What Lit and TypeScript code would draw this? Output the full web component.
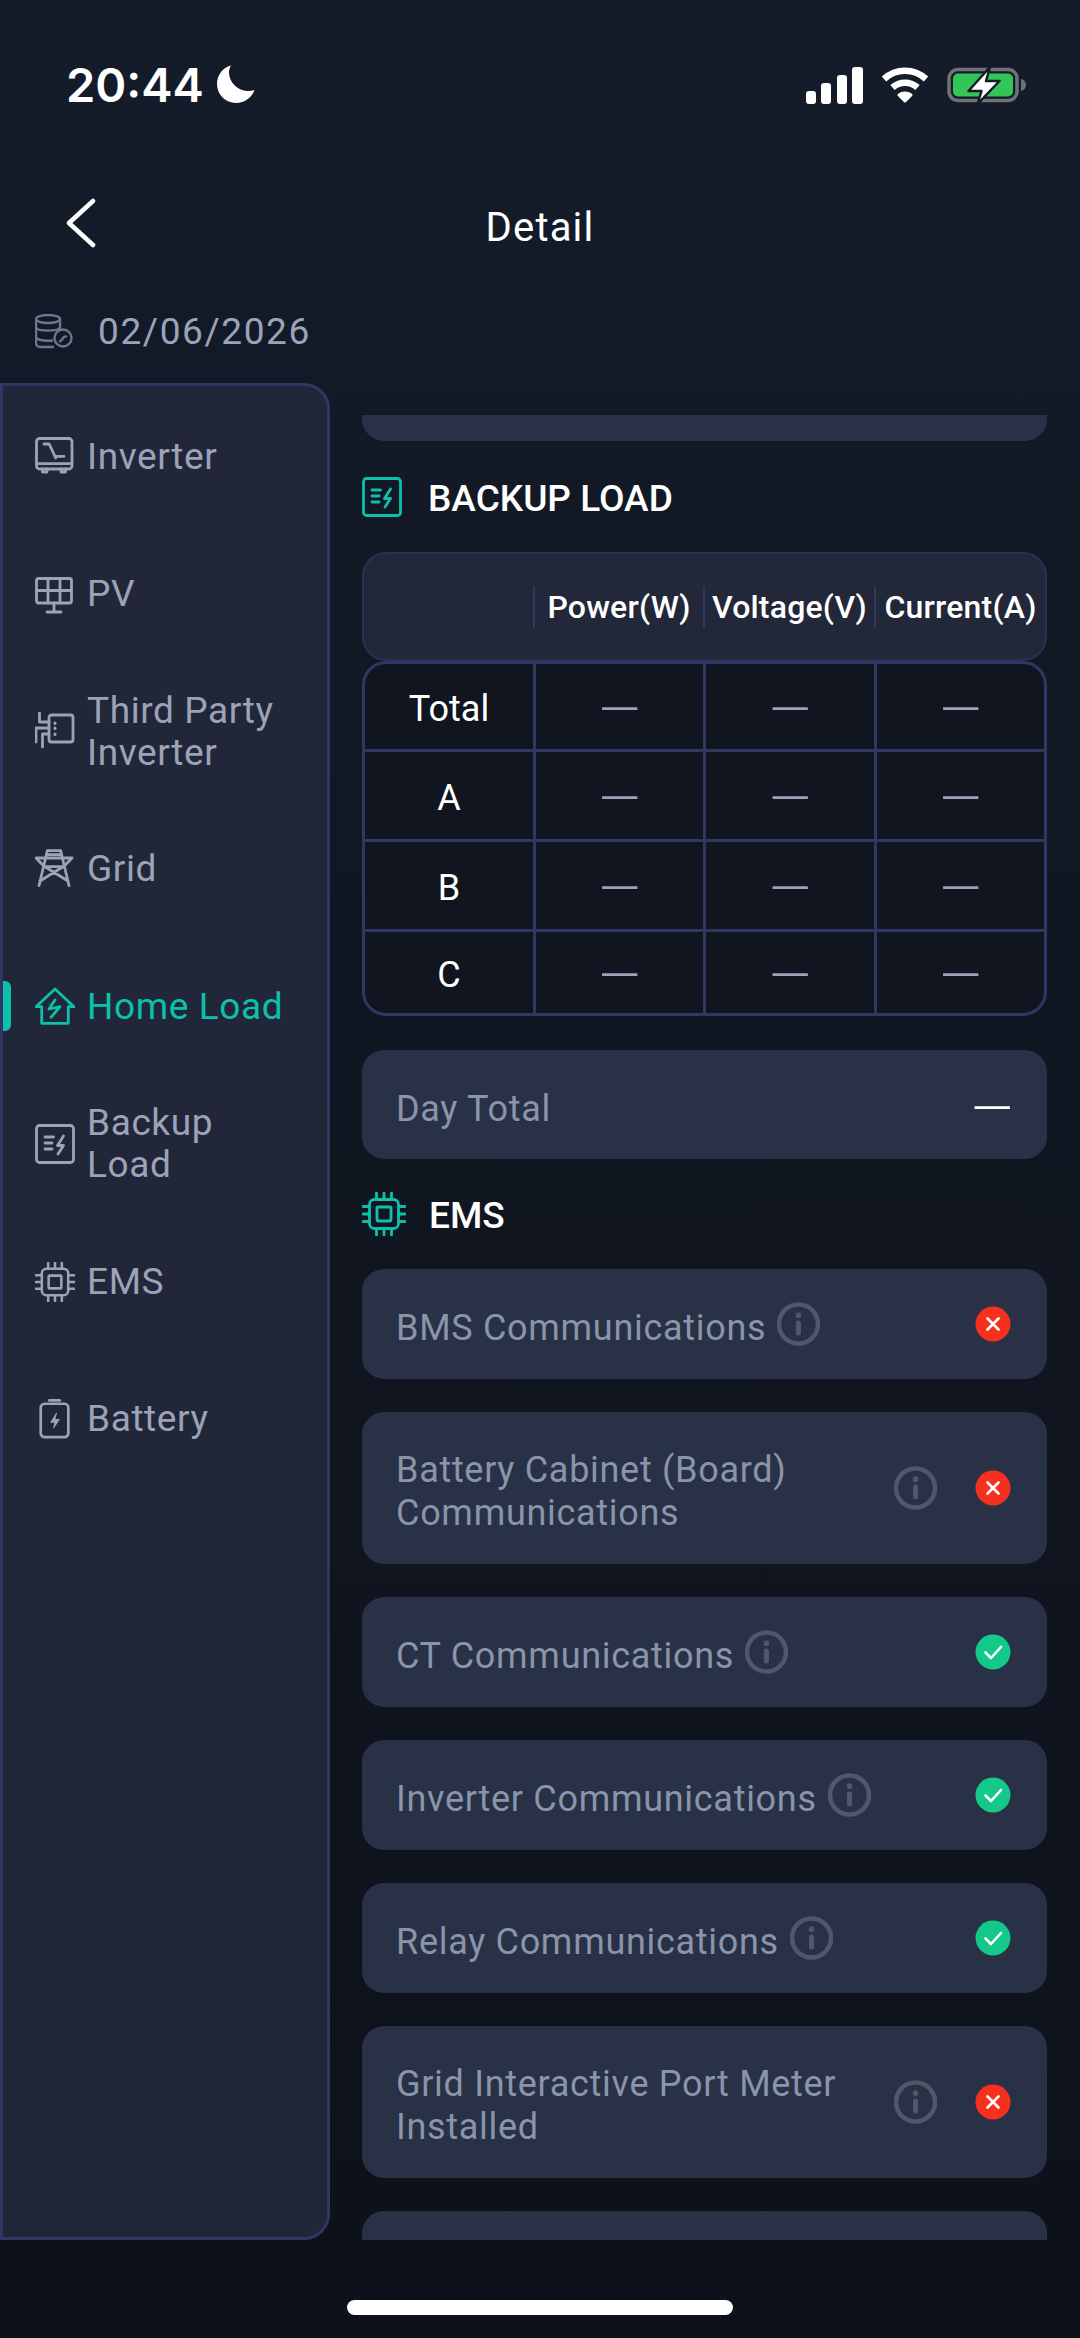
import { LitElement, css, html, svg } from "lit";
import { customElement } from "lit/decorators.js";

const icons: Record<string, unknown> = {
  inverter: svg`<rect x="1.500" y="1.500" width="35.500" height="30.500" rx="3"/><path d="M1.500 26.700h35.500M7.500 32v3h4.500v-3M26 32v3h4.500v-3M9 7h5M14.700 8l6 13M22.300 19.300H29"/>`,
  pv: svg`<rect x="1.500" y="4.500" width="35" height="24.500" rx="2"/><path d="M13 4.500V29M25 4.500V29M1.500 16.500h35M19 29v9M12 38h14"/>`,
  third: svg`<rect x="14" y="3" width="24" height="27" rx="2.500"/><path d="M4.500 0v10H14M1 30V16h13M7.500 35V22H14"/><path d="M20 11v.5M20 16v.5M20 22v.5" stroke-width="3"/>`,
  grid: svg`<path d="M12.300 1.700h13.400M11.500 5.700h15M1 9h36M1 9l8.500 8.700M37 9l-8.500 8.700M9.500 17.700h19M12.300 1.700 4 36.700M25.700 1.700 34 36.700M10 17.700 33 32M28 17.700 5 32"/>`,
  home: svg`<path d="M20 2 1 19.700h5.700v16.600h26.600V19.700H39z"/><path d="M20 13l-6 9 11-2.300-9 10.600"/>`,
  backup: svg`<rect x="1.500" y="1.500" width="37" height="37" rx="3"/><path d="M10 13h8.500M10 19h7M10 25h7M28.500 12l-6 9.500h6L23 30"/>`,
  ems: svg`<rect x="7.500" y="7.500" width="29" height="29" rx="5"/><rect x="15" y="15" width="14" height="14" rx="1"/><path d="M14.500 1v6.500M22 1v6.500M29.500 1v6.500M14.500 36.500V43M22 36.500V43M29.500 36.500V43M1 14.500h6.500M1 22h6.500M1 29.500h6.500M36.500 14.500H43M36.500 22H43M36.500 29.500H43"/>`,
  battery: svg`<rect x="5" y="5" width="29" height="35" rx="4"/><path d="M14 1.500h11"/><path d="M21.500 15 15.500 24.500h4.500l-1.500 6 6-9h-4.500z" fill="currentColor" stroke-width="1"/>`,
};

const navItems = [
  { key: "inverter", label: "Inverter" },
  { key: "pv", label: "PV" },
  { key: "third", label: "Third Party Inverter" },
  { key: "grid", label: "Grid" },
  { key: "home", label: "Home Load", active: true },
  { key: "backup", label: "Backup Load" },
  { key: "ems", label: "EMS" },
  { key: "battery", label: "Battery" },
];

const tableRows = ["Total", "A", "B", "C"];

const comms = [
  { label: "BMS Communications", ok: false },
  { label: "Battery Cabinet (Board) Communications", ok: false },
  { label: "CT Communications", ok: true },
  { label: "Inverter Communications", ok: true },
  { label: "Relay Communications", ok: true },
  { label: "Grid Interactive Port Meter Installed", ok: false },
];

@customElement("app-root")
export class AppRoot extends LitElement {
  static styles = css`
    :host {
      display: block;
      width: 1080px;
      height: 2338px;
      overflow: hidden;
      font-family: "Roboto", "Noto Sans", sans-serif;
      background: linear-gradient(180deg, #141c2a 0%, #111722 40%, #0d111a 100%);
    }

    .status {
      height: 170px;
      padding: 0 53px 0 66px;
      box-sizing: border-box;
      display: flex;
      align-items: center;
      justify-content: space-between;
      color: #fff;
    }

    .time {
      display: flex;
      align-items: center;
      gap: 13px;
      margin-top: -2px;
      font-family: "Inter", sans-serif;
      font-size: 47px;
      font-weight: 600;
    }

    .status-icons {
      display: flex;
      align-items: center;
      gap: 18px;
    }

    .nav {
      height: 114px;
      position: relative;
      display: flex;
      align-items: center;
      justify-content: center;
      color: #fff;
      font-size: 40px;
      font-weight: 400;
      letter-spacing: 1.200px;
    }

    .back {
      position: absolute;
      left: 62px;
      top: 28px;
    }

    .date {
      height: 99px;
      padding: 0 0 4px 35px;
      box-sizing: border-box;
      display: flex;
      align-items: center;
      gap: 25px;
      color: #9ca3b9;
      font-size: 37px;
      letter-spacing: 1.600px;
    }

    .main {
      height: 1857px;
      display: flex;
    }

    .sidebar {
      width: 330px;
      box-sizing: border-box;
      position: relative;
      padding-top: 2px;
      background: #212738;
      border: 3px solid #2f3762;
      border-radius: 0 26px 26px 0;
    }

    .nav-item {
      height: 137.500px;
      display: flex;
      align-items: center;
      gap: 12px;
      padding-left: 32px;
      color: #9ca3b9;
      font-size: 37px;
      line-height: 42px;
      letter-spacing: 0.600px;
    }

    .nav-item span {
      max-width: 198px;
    }

    .nav-item.active {
      color: #0cc0ab;
      position: relative;
    }

    .nav-item.active::before {
      content: "";
      position: absolute;
      left: 0;
      top: 43px;
      width: 8px;
      height: 50px;
      background: #0cc0ab;
      border-radius: 0 6px 6px 0;
    }

    .nav-item svg {
      flex: none;
    }

    .line-icon {
      fill: none;
      stroke: currentColor;
      stroke-width: 2.800;
      stroke-linecap: round;
      stroke-linejoin: round;
    }

    .content {
      width: 685px;
      margin: 32px 0 0 32px;
      overflow: hidden;
    }

    .scroller {
      margin-top: -84px;
    }

    .card {
      background: #283145;
      border-radius: 22px;
    }

    .ghost {
      height: 110px;
    }

    .section {
      height: 111px;
      display: flex;
      align-items: center;
      gap: 26px;
      color: #fff;
      font-size: 37px;
      font-weight: 500;
    }

    .section span {
      padding-top: 3px;
    }

    .section svg {
      color: #0cc0ab;
    }

    .section.chip {
      height: 110px;
      gap: 23px;
    }

    .table-head,
    .table-row {
      display: grid;
    }

    .table-head {
      height: 109px;
      box-sizing: border-box;
      grid-template-columns: 169px 170px 171px 1fr;
      align-items: center;
      background: #222839;
      border: 2px solid #2b3150;
      border-radius: 24px;
      color: #fff;
      font-size: 32px;
      font-weight: 500;
      letter-spacing: 0.200px;
      text-align: center;
    }

    .table-head span {
      height: 42px;
      line-height: 42px;
      border-left: 2px solid #2f3762;
      white-space: nowrap;
    }

    .table-head span:first-child {
      border-left: none;
    }

    .table-body {
      height: 355px;
      box-sizing: border-box;
      border: 3px solid #2f3762;
      border-radius: 24px;
      overflow: hidden;
      background: #10151f;
    }

    .table-row {
      height: 90px;
      box-sizing: border-box;
      grid-template-columns: 168px 170px 171px 1fr;
      border-top: 3px solid #2f3762;
      color: #fff;
      font-size: 36px;
    }

    .table-row:first-child {
      height: 85px;
      border-top: none;
    }

    .table-row:last-child {
      height: 84px;
    }

    .table-row span {
      display: flex;
      align-items: center;
      justify-content: center;
      padding-top: 4px;
      border-left: 3px solid #2f3762;
    }

    .table-row span:first-child {
      border-left: none;
    }

    .table-row .dash {
      padding-top: 6px;
    }

    .dash {
      font-size: 54px;
      font-weight: 300;
      color: #9ca3b9;
    }

    .day-total {
      margin-top: 34px;
      height: 109px;
      padding: 8px 34px 0;
      box-sizing: border-box;
      display: flex;
      align-items: center;
      justify-content: space-between;
      color: #8a94aa;
      font-size: 36px;
      letter-spacing: 0.700px;
    }

    .day-total .dash {
      color: #fff;
      letter-spacing: 0;
    }

    .rows {
      display: flex;
      flex-direction: column;
      gap: 33px;
    }

    .row {
      min-height: 110px;
      padding: 0 36px 0 34px;
      box-sizing: border-box;
      display: flex;
      align-items: center;
      justify-content: space-between;
      color: #8a94aa;
      font-size: 36px;
      line-height: 43px;
      letter-spacing: 0.700px;
    }

    .row.tall {
      min-height: 152px;
    }

    .label {
      display: flex;
      align-items: center;
      gap: 11px;
    }

    .label span {
      padding-top: 8px;
    }

    .info {
      flex: none;
      fill: none;
      stroke: #4e5869;
      stroke-width: 4.500;
      stroke-linecap: round;
    }

    .state {
      flex: none;
      margin-left: 38px;
    }

    .home-bar {
      width: 386px;
      height: 15px;
      margin: 60px auto 0;
      background: #fff;
      border-radius: 8px;
    }
  `;

  private renderStatusBar() {
    return html`
      <div class="status">
        <div class="time">
          20:44
          <svg width="38" height="38" viewBox="0 0 38 38" fill="#fff">
            <path d="M14 0.500C5.500 2.800 0 10.200 0 19c0 10.500 8.500 19 19 19 8.500 0 15.800-5.400 18.500-13-2 .6-4 1-6 1C21 26 12 17.500 12 7c0-2.300.8-4.500 2-6.500z" />
          </svg>
        </div>
        <div class="status-icons">
          <svg width="57" height="37" viewBox="0 0 57 37" fill="#fff">
            <rect x="0" y="24" width="10" height="13" rx="3" />
            <rect x="15" y="16" width="10" height="21" rx="3" />
            <rect x="31" y="8" width="10" height="29" rx="3" />
            <rect x="46" y="0" width="11" height="37" rx="3" />
          </svg>
          <svg width="48" height="38" viewBox="0 0 48 38" fill="none" stroke="#fff" stroke-width="6.500">
            <path d="M3 13C15 2 33 2 45 13" />
            <path d="M11.500 21.500C18.500 15 29.500 15 36.500 21.500" />
            <path d="M18 29c3.500-2.800 8.500-2.800 12 0L24 35z" fill="#fff" stroke-width="3" stroke-linejoin="round" />
          </svg>
          <svg width="80" height="38" viewBox="0 0 80 38">
            <rect x="2" y="3.500" width="68" height="31" rx="9" fill="none" stroke="#6f7179" stroke-width="3.500" />
            <rect x="6" y="7.500" width="60" height="23" rx="5" fill="#34c559" />
            <path d="M74 13c3 .6 5 3 5 6s-2 5.400-5 6z" fill="#6f7179" />
            <path d="M43 1 21.500 25h13L30.500 38 52.500 15H39z" fill="#fff" stroke="#141c2a" stroke-width="2.500" stroke-linejoin="round" />
          </svg>
        </div>
      </div>
    `;
  }

  private renderInfo() {
    return html`
      <svg class="info" width="43" height="44" viewBox="0 0 43 44">
        <circle cx="21.500" cy="22" r="19.500" />
        <path d="M21.500 21v10" stroke-width="5" />
        <path d="M21.500 13v.5" stroke-width="5.500" />
      </svg>
    `;
  }

  private renderState(ok: boolean) {
    return html`
      <svg class="state" width="36" height="36" viewBox="0 0 36 36">
        <circle cx="18" cy="18" r="17.500" fill=${ok ? "#14c88a" : "#f5301f"} />
        ${ok
          ? svg`<path d="M10.500 18.500l5.500 5.500 10-11" fill="none" stroke="#fff" stroke-width="2.600" stroke-linecap="round" stroke-linejoin="round" />`
          : svg`<path d="M12.500 12.500l11 11M23.500 12.500l-11 11" fill="none" stroke="#fff" stroke-width="2.600" stroke-linecap="round" />`}
      </svg>
    `;
  }

  render() {
    return html`
      ${this.renderStatusBar()}
      <div class="nav">
        <svg class="back" width="36" height="50" viewBox="0 0 36 50" fill="none" stroke="#fff" stroke-width="4.500" stroke-linecap="round" stroke-linejoin="round">
          <path d="M31 3 7 25l24 22" />
        </svg>
        Detail
      </div>
      <div class="date">
        <svg width="38" height="36" viewBox="0 0 38 36" fill="none" stroke="#6d7690" stroke-width="2.400">
          <ellipse cx="13" cy="5" rx="12" ry="4" />
          <path d="M1 5v24c0 2.500 2 4 4 4h14M25 5v10M1 14c3 3.500 21 3.500 24 0M1 24c3 2.500 10 3 17 2.500" />
          <circle cx="28" cy="24" r="8.500" />
          <path d="M24 27c2 1 3-1.500 4-3s2.500-2 4-1" />
        </svg>
        02/06/2026
      </div>
      <div class="main">
        <div class="sidebar">
          ${navItems.map(
            (item) => html`
              <div class="nav-item ${item.active ? "active" : ""}">
                <svg class="line-icon" width="40" height="40" viewBox="0 0 ${item.key === "ems" ? 44 : 40} ${item.key === "ems" ? 44 : item.key === "battery" ? 42 : 40}">
                  ${icons[item.key]}
                </svg>
                <span>${item.label}</span>
              </div>
            `,
          )}
        </div>
        <div class="content">
          <div class="scroller">
            <div class="card ghost"></div>
            <div class="section">
              <svg class="line-icon" width="40" height="40" viewBox="0 0 40 40">${icons.backup}</svg>
              <span>BACKUP LOAD</span>
            </div>
            <div class="table-head">
              <span></span>
              <span>Power(W)</span>
              <span>Voltage(V)</span>
              <span>Current(A)</span>
            </div>
            <div class="table-body">
              ${tableRows.map(
                (name) => html`
                  <div class="table-row">
                    <span>${name}</span>
                    <span class="dash">—</span>
                    <span class="dash">—</span>
                    <span class="dash">—</span>
                  </div>
                `,
              )}
            </div>
            <div class="card day-total">
              <span>Day Total</span>
              <span class="dash">—</span>
            </div>
            <div class="section chip">
              <svg class="line-icon" width="44" height="44" viewBox="0 0 44 44">${icons.ems}</svg>
              <span>EMS</span>
            </div>
            <div class="rows">
              ${comms.map(
                (row) => html`
                  <div class="card row ${row.label.length > 30 ? "tall" : ""}">
                    <div class="label">
                      <span>${row.label}</span>
                      ${this.renderInfo()}
                    </div>
                    ${this.renderState(row.ok)}
                  </div>
                `,
              )}
              <div class="card row"></div>
            </div>
          </div>
        </div>
      </div>
      <div class="home-bar"></div>
    `;
  }
}
